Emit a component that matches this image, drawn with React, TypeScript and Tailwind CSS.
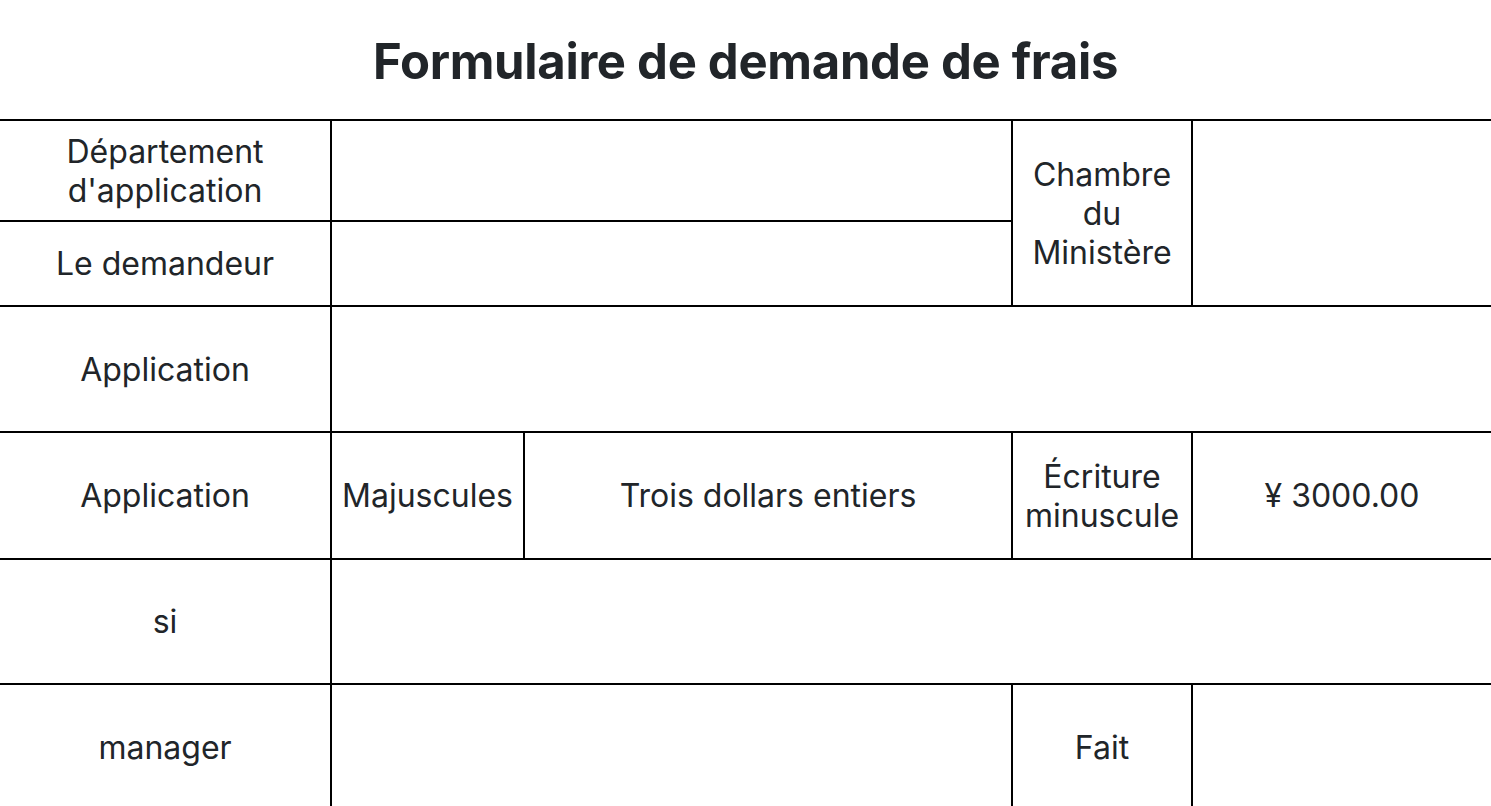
import React from 'react';

const cell = 'border-2 border-black text-center align-middle px-2';

const App = () => {
  return (
    <div className="min-h-screen bg-white font-['Inter',sans-serif] text-[#212529] overflow-hidden">
      <h1 className="text-[49px] font-bold text-center pt-[33px] pb-[28px] leading-[58px] tracking-[-0.3px]">
        Formulaire de demande de frais
      </h1>
      <table className="w-full table-fixed border-collapse text-[32px] leading-[39px] border-x-0 [&_td:first-child]:border-l-0 [&_td:last-child]:border-r-0">
        <colgroup>
          <col className="w-[331px]" />
          <col className="w-[193px]" />
          <col className="w-[488px]" />
          <col className="w-[180px]" />
          <col />
        </colgroup>
        <tbody>
          <tr className="h-[101px]">
            <td className={cell}>
              Département
              <br />
              d'application
            </td>
            <td className={cell} colSpan={2}></td>
            <td className={cell} rowSpan={2}>
              Chambre
              <br />
              du
              <br />
              Ministère
            </td>
            <td className={cell} rowSpan={2}></td>
          </tr>
          <tr className="h-[85px]">
            <td className={cell}>Le demandeur</td>
            <td className={cell} colSpan={2}></td>
          </tr>
          <tr className="h-[126px]">
            <td className={cell}>Application</td>
            <td className={cell} colSpan={4}></td>
          </tr>
          <tr className="h-[127px]">
            <td className={cell}>Application</td>
            <td className={cell}>Majuscules</td>
            <td className={cell}>Trois dollars entiers</td>
            <td className={cell}>
              Écriture
              <br />
              minuscule
            </td>
            <td className={cell}>¥ 3000.00</td>
          </tr>
          <tr className="h-[125px]">
            <td className={cell}>si</td>
            <td className={cell} colSpan={4}></td>
          </tr>
          <tr className="h-[126px]">
            <td className={cell}>manager</td>
            <td className={cell} colSpan={2}></td>
            <td className={cell}>Fait</td>
            <td className={cell}></td>
          </tr>
        </tbody>
      </table>
    </div>
  );
};

export default App;
